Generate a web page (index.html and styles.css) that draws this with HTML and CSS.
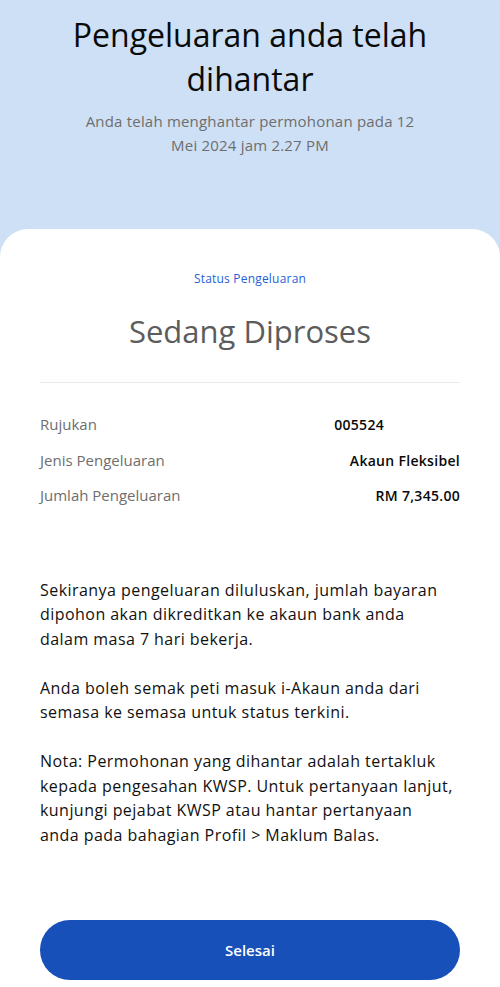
FILE: index.html
```html
<!DOCTYPE html>
<html lang="ms">
<head>
    <meta charset="UTF-8">
    <title>Pengeluaran dihantar</title>
    <link rel="stylesheet" href="styles.css">
</head>
<body>
    <div class="top">
        <h1 class="title">Pengeluaran anda telah dihantar</h1>
        <p class="sub">Anda telah menghantar permohonan pada 12 Mei 2024 jam 2.27 PM</p>
    </div>
    <div class="card">
        <div class="status-label">Status Pengeluaran</div>
        <div class="status">Sedang Diproses</div>
        <hr class="line">
        <div class="rows">
            <div class="row">
                <span class="lbl">Rujukan</span>
                <span class="val val-ref">005524</span>
            </div>
            <div class="row">
                <span class="lbl">Jenis Pengeluaran</span>
                <span class="val">Akaun Fleksibel</span>
            </div>
            <div class="row">
                <span class="lbl">Jumlah Pengeluaran</span>
                <span class="val">RM 7,345.00</span>
            </div>
        </div>
        <div class="info">
            <p>Sekiranya pengeluaran diluluskan, jumlah bayaran dipohon akan dikreditkan ke akaun bank anda dalam masa 7 hari bekerja.</p>
            <p>Anda boleh semak peti masuk i-Akaun anda dari semasa ke semasa untuk status terkini.</p>
            <p class="note">Nota: Permohonan yang dihantar adalah tertakluk kepada pengesahan KWSP. Untuk pertanyaan lanjut,<br>kunjungi pejabat KWSP atau hantar pertanyaan<br>anda pada bahagian Profil &gt; Maklum Balas.</p>
        </div>
        <button class="btn">Selesai</button>
    </div>
</body>
</html>
```

FILE: styles.css
```css
* {
    box-sizing: border-box;
}
body {
    margin: 0;
    background-color: #cde0f5;
    font-family: "Open Sans", "Liberation Sans", sans-serif;
    color: #111;
}
.top {
    padding: 13px 40px 0;
    height: 229px;
    text-align: center;
}
.title {
    margin: 0 auto;
    width: 380px;
    font-size: 32px;
    font-weight: 400;
    line-height: 44px;
    color: #0a0a0a;
}
.sub {
    margin: 8px auto 0;
    width: 345px;
    font-size: 15px;
    letter-spacing: 0.2px;
    line-height: 24px;
    color: #6e6e6e;
}
.card {
    background-color: #fff;
    border-radius: 28px 28px 0 0;
    padding: 42px 40px 0;
    height: 758px;
}
.status-label {
    text-align: center;
    font-size: 12px;
    letter-spacing: 0.2px;
    line-height: 16px;
    color: #1f5fd8;
}
.status {
    margin-top: 24px;
    text-align: center;
    font-size: 31px;
    line-height: 40px;
    color: #5c5c5c;
}
.line {
    margin: 31px 0 0;
    border: 0;
    border-top: 1px solid #e9e9e9;
}
.rows {
    margin-top: 23px;
}
.row {
    display: flex;
    justify-content: space-between;
    align-items: baseline;
    height: 35.5px;
    line-height: 36px;
}
.lbl {
    font-size: 15px;
    color: #6e6e6e;
}
.val {
    font-size: 14px;
    letter-spacing: 0.3px;
    color: #0a0a0a;
    font-weight: 600;
}
.val-ref {
    margin-right: 76px;
}
.info {
    margin-top: 65px;
}
.info p {
    width: 407px;
    margin: 0 0 24.5px;
    font-size: 16px;
    letter-spacing: 0.45px;
    line-height: 24.5px;
    color: #111;
}
.info .note {
    width: auto;
    margin-bottom: 0;
}
.btn {
    display: block;
    width: 100%;
    height: 60px;
    margin-top: 73px;
    border: 0;
    border-radius: 30px;
    background-color: #1750b8;
    color: #fff;
    font-family: inherit;
    font-size: 15px;
    font-weight: 600;
}
```
